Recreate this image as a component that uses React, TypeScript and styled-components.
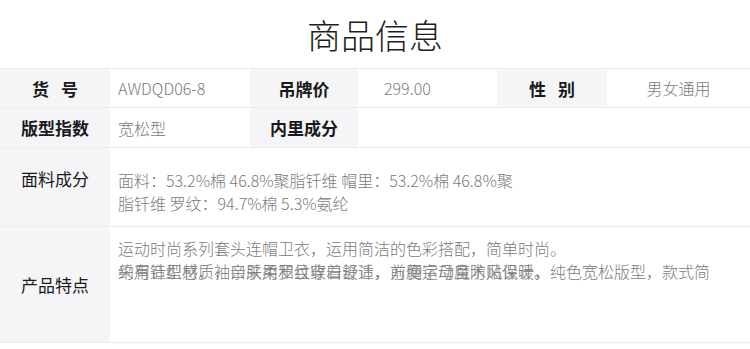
import React from "react";
import styled, { createGlobalStyle } from "styled-components";

const GlobalStyle = createGlobalStyle`
  html, body { margin: 0; padding: 0; background: #ffffff; }
  body { font-family: "Noto Sans CJK SC", "Noto Sans", sans-serif; }
`;

const Page = styled.div`
  width: 750px;
  background: #ffffff;
`;

const Title = styled.h1`
  margin: 0;
  height: 68px;
  display: flex;
  align-items: center;
  justify-content: center;
  font-size: 34px;
  font-weight: 300;
  color: #1e1e1e;
`;

const Table = styled.div`
  display: flex;
  flex-direction: column;
  border-bottom: 1px solid #ececec;
`;

const Row = styled.div<{ $h: number }>`
  display: flex;
  height: ${(p) => p.$h}px;
  border-top: 1px solid #ececec;
`;

const Label = styled.div<{ $w: number; $ws?: number; $pb?: number; $weight?: number }>`
  flex: 0 0 ${(p) => p.$w}px;
  display: flex;
  align-items: center;
  justify-content: center;
  padding-bottom: ${(p) => p.$pb ?? 0}px;
  box-sizing: border-box;
  background: #f5f5f8;
  font-size: 17px;
  font-weight: ${(p) => p.$weight ?? 700};
  color: #1a1a1a;
  word-spacing: ${(p) => p.$ws ?? 0}px;
  white-space: pre;
`;

const Value = styled.div<{ $w?: number; $pl?: number; $center?: boolean }>`
  ${(p) => (p.$w ? `flex: 0 0 ${p.$w}px;` : "flex: 1 1 auto;")}
  display: flex;
  align-items: center;
  justify-content: ${(p) => (p.$center ? "center" : "flex-start")};
  padding-left: ${(p) => p.$pl ?? 8}px;
  box-sizing: border-box;
  font-size: 16px;
  font-weight: 300;
  color: #7b7b7b;
`;

const TextBlock = styled.div<{ $pt: number }>`
  flex: 1 1 auto;
  padding: ${(p) => p.$pt}px 0 0 8px;
  font-size: 16px;
  font-weight: 300;
  line-height: 23px;
  color: #7b7b7b;
`;

const Line = styled.div`
  white-space: nowrap;
`;

const Overlap = styled.div`
  display: grid;
  & > * {
    grid-area: 1 / 1;
  }
`;

export default function App() {
  return (
    <Page>
      <GlobalStyle />
      <Title>商品信息</Title>
      <Table>
        <Row $h={38}>
          <Label $w={110} $ws={8}>货 号</Label>
          <Value $w={140}>AWDQD06-8</Value>
          <Label $w={108}>吊牌价</Label>
          <Value $w={139} $pl={26}>299.00</Value>
          <Label $w={110} $ws={8}>性 别</Label>
          <Value $center $pl={0}>男女通用</Value>
        </Row>
        <Row $h={39}>
          <Label $w={110}>版型指数</Label>
          <Value $w={140}>宽松型</Value>
          <Label $w={108}>内里成分</Label>
          <Value />
        </Row>
        <Row $h={78}>
          <Label $w={110} $pb={17} $weight={400}>面料成分</Label>
          <TextBlock $pt={21}>
            <Line>面料：53.2%棉 46.8%聚脂钎维 帽里：53.2%棉 46.8%聚</Line>
            <Line>脂钎维 罗纹：94.7%棉 5.3%氨纶</Line>
          </TextBlock>
        </Row>
        <Row $h={115}>
          <Label $w={110} $weight={400}>产品特点</Label>
          <TextBlock $pt={10}>
            <Line>运动时尚系列套头连帽卫衣，运用简洁的色彩搭配，简单时尚。</Line>
            <Overlap>
              <Line>采用针织材质，亲肤柔和且穿着舒适，前胸字母魔术贴设计，纯色宽松版型，款式简</Line>
              <Line>约有造型感，袖口采用罗纹收口设计，方便运动且防风保暖。</Line>
            </Overlap>
          </TextBlock>
        </Row>
      </Table>
    </Page>
  );
}
